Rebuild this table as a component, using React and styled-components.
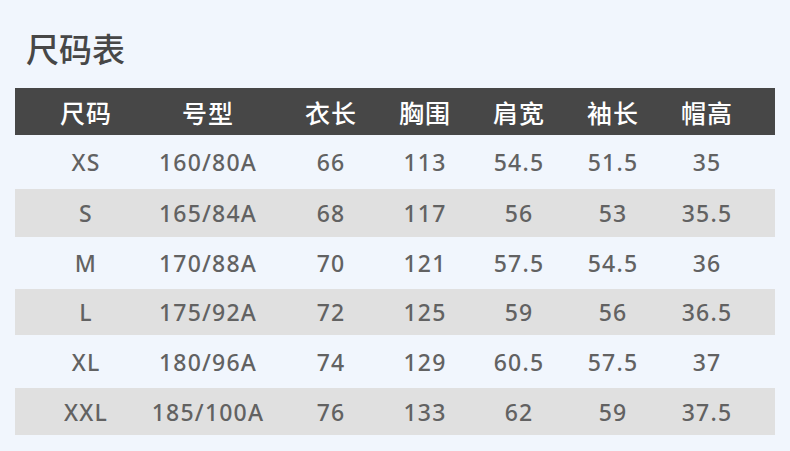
import styled, { createGlobalStyle } from 'styled-components'

const GlobalStyle = createGlobalStyle`
  html, body {
    margin: 0;
    padding: 0;
    background: #f1f6fd;
  }
  body {
    font-family: "Noto Sans", "Noto Sans CJK SC", sans-serif;
  }
`

const Page = styled.div`
  width: 790px;
  height: 451px;
  box-sizing: border-box;
  padding: 26px 15px 0 15px;
  background: #f1f6fd;
  overflow: hidden;
`

const Title = styled.h1`
  margin: 0 0 0 11px;
  height: 62px;
  font-family: "Noto Sans CJK SC", sans-serif;
  font-size: 33px;
  line-height: 44px;
  font-weight: 500;
  color: #474747;
`

const Table = styled.div`
  display: flex;
  flex-direction: column;
`

const Row = styled.div`
  display: grid;
  grid-template-columns: 92px 152px repeat(5, 94px);
  padding: 0 21px 0 25px;
  height: ${props => props.h}px;
  align-items: center;
  background: ${props => props.bg};
`

const HeadCell = styled.div`
  text-align: center;
  font-family: "Noto Sans CJK SC", sans-serif;
  font-size: 25px;
  font-weight: 500;
  letter-spacing: 1px;
  color: #ffffff;
`

const Cell = styled.div`
  text-align: center;
  font-size: 23px;
  font-weight: 500;
  letter-spacing: 1.2px;
  color: #626262;
  white-space: nowrap;
`

const head = ['尺码', '号型', '衣长', '胸围', '肩宽', '袖长', '帽高']

const rows = [
  ['XS', '160/80A', '66', '113', '54.5', '51.5', '35'],
  ['S', '165/84A', '68', '117', '56', '53', '35.5'],
  ['M', '170/88A', '70', '121', '57.5', '54.5', '36'],
  ['L', '175/92A', '72', '125', '59', '56', '36.5'],
  ['XL', '180/96A', '74', '129', '60.5', '57.5', '37'],
  ['XXL', '185/100A', '76', '133', '62', '59', '37.5'],
]

const heights = [54, 48, 52, 46, 53, 47]

export default function App() {
  return (
    <Page>
      <GlobalStyle />
      <Title>尺码表</Title>
      <Table>
        <Row h={47} bg="#474747">
          {head.map(t => (
            <HeadCell key={t}>{t}</HeadCell>
          ))}
        </Row>
        {rows.map((r, i) => (
          <Row key={r[0]} h={heights[i]} bg={i % 2 ? '#e0e0e0' : 'transparent'}>
            {r.map((v, j) => (
              <Cell key={j}>{v}</Cell>
            ))}
          </Row>
        ))}
      </Table>
    </Page>
  )
}
